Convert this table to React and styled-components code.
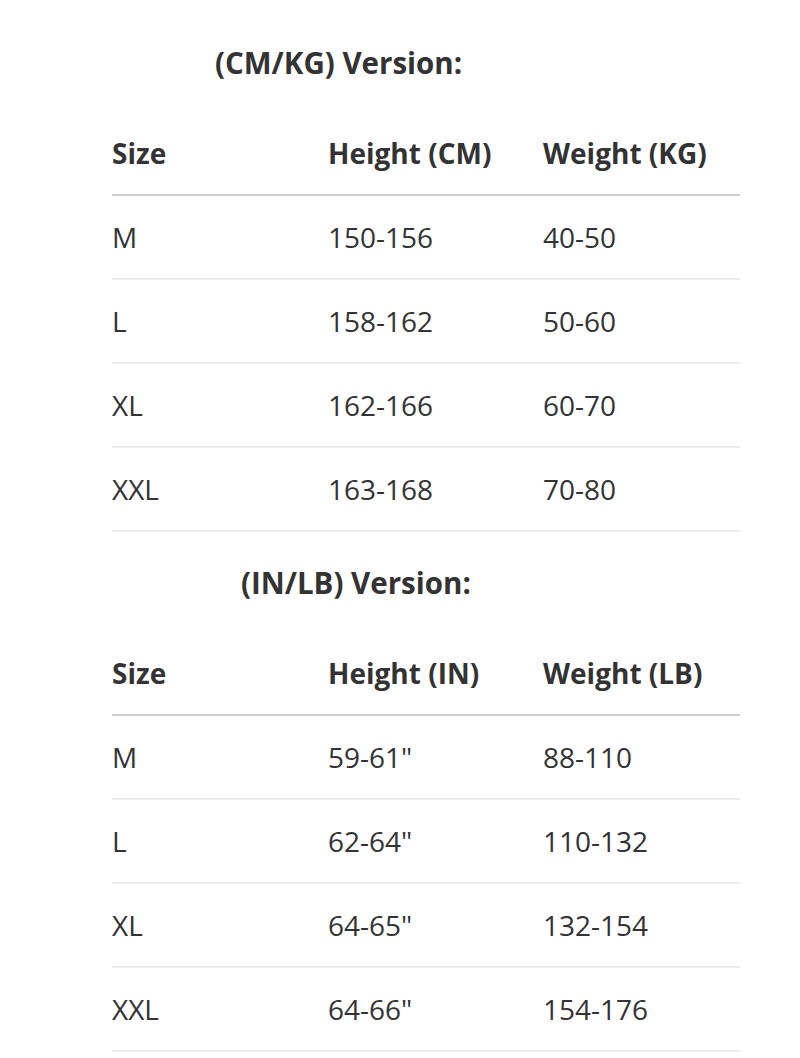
import React from "react";
import styled, { createGlobalStyle } from "styled-components";

const Global = createGlobalStyle`
  html, body { margin: 0; padding: 0; background: #fff; }
  body { font-family: "Open Sans", "Noto Sans", sans-serif; color: #333; }
`;

const Page = styled.div`
  width: 800px;
  padding: 40px 60px 0 112px;
  box-sizing: border-box;
`;

const Section = styled.section`
  display: flex;
  flex-direction: column;
  margin-bottom: ${(p) => p.$gap || 0}px;
`;

const Title = styled.h2`
  margin: 0;
  padding-left: ${(p) => p.$indent}px;
  font-size: 29.5px;
  font-weight: 700;
  line-height: 46px;
  color: #333;
  white-space: nowrap;
`;

const Table = styled.div`
  width: 628px;
  margin-top: 26px;
`;

const Row = styled.div`
  display: grid;
  grid-template-columns: 216px 215px 1fr;
  align-items: center;
  height: 82px;
  border-bottom: 2px solid ${(p) => (p.$head ? "#cfcfcf" : "#ececec")};
`;

const Cell = styled.div`
  font-size: 28px;
  line-height: 34px;
  font-weight: ${(p) => (p.$bold ? 700 : 400)};
  color: #333;
  white-space: nowrap;
`;

const data = [
  {
    title: "(CM/KG) Version:",
    indent: 103,
    head: ["Size", "Height (CM)", "Weight (KG)"],
    rows: [
      ["M", "150-156", "40-50"],
      ["L", "158-162", "50-60"],
      ["XL", "162-166", "60-70"],
      ["XXL", "163-168", "70-80"],
    ],
  },
  {
    title: "(IN/LB) Version:",
    indent: 129,
    head: ["Size", "Height (IN)", "Weight (LB)"],
    rows: [
      ["M", '59-61"', "88-110"],
      ["L", '62-64"', "110-132"],
      ["XL", '64-65"', "132-154"],
      ["XXL", '64-66"', "154-176"],
    ],
  },
];

export default function App() {
  return (
    <Page>
      <Global />
      {data.map((s, i) => (
        <Section key={i} $gap={i === 0 ? 28 : 0}>
          <Title $indent={s.indent}>{s.title}</Title>
          <Table>
            <Row $head>
              {s.head.map((h) => (
                <Cell key={h} $bold>{h}</Cell>
              ))}
            </Row>
            {s.rows.map((r) => (
              <Row key={r[0]}>
                {r.map((c, j) => (
                  <Cell key={j}>{c}</Cell>
                ))}
              </Row>
            ))}
          </Table>
        </Section>
      ))}
    </Page>
  );
}
